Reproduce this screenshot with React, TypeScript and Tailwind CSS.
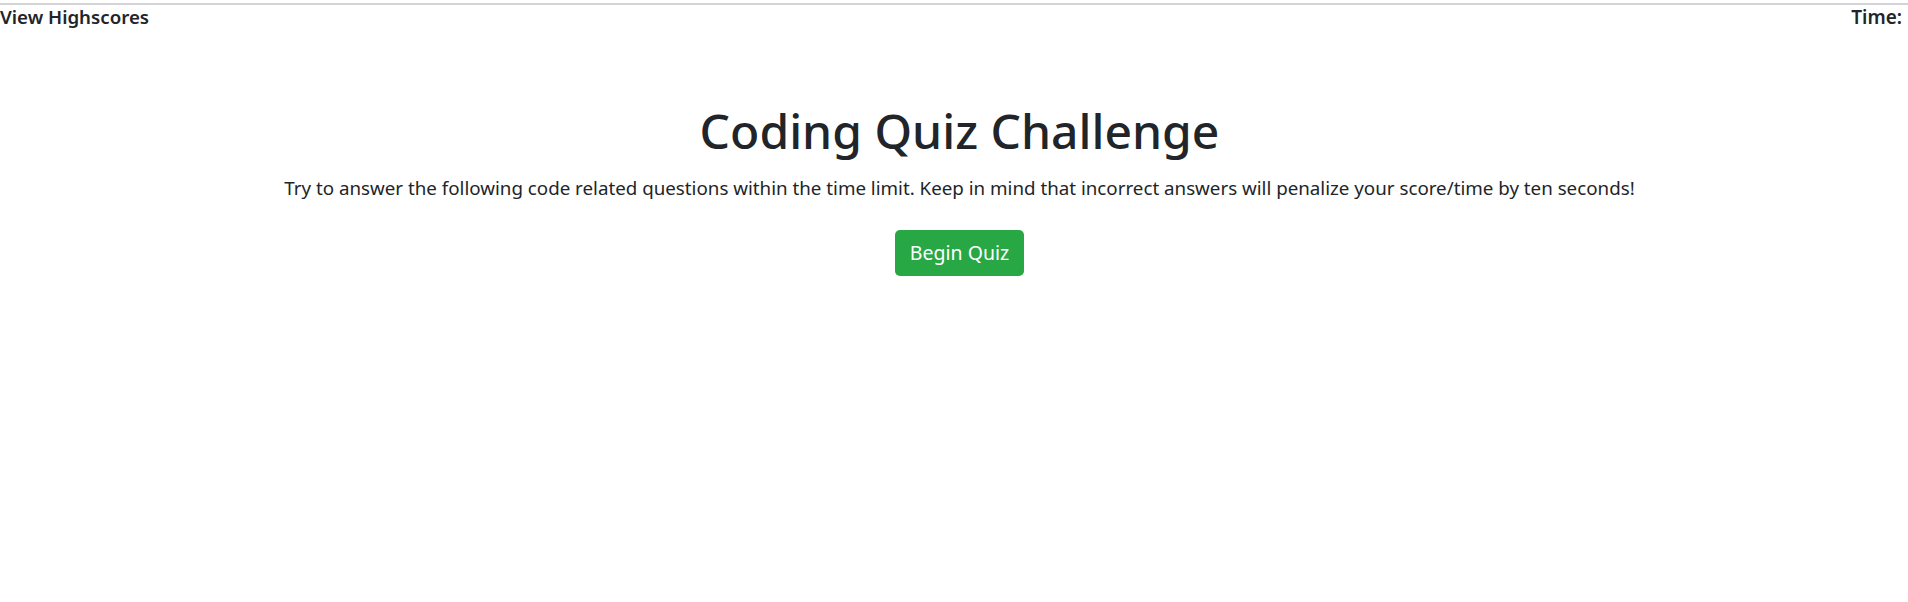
export default function App() {
  return (
    <div className="min-h-screen bg-white text-[#212529]" style={{ fontFamily: '"Noto Sans", "Open Sans", Arial, sans-serif' }}>
      <div className="pt-[3px]">
        <div className="border-t-2 border-[#d4d4d8] flex justify-between items-center pr-[6px]">
          <span className="font-semibold text-[18.7px] leading-[24px]">View Highscores</span>
          <span className="font-semibold text-[19px] leading-[24px]">Time:</span>
        </div>
      </div>
      <div className="flex flex-col items-center mt-[68px] pl-[11px]">
        <h1 className="text-[48px] leading-[67px] font-medium">Coding Quiz Challenge</h1>
        <p className="text-[18.75px] leading-[30px] mt-[9px]">
          Try to answer the following code related questions within the time limit. Keep in mind that incorrect answers will penalize your score/time by ten seconds!
        </p>
        <button className="mt-[27px] h-[46px] px-[15px] bg-[#28a745] text-white text-[19.5px] rounded-[5px]">Begin Quiz</button>
      </div>
    </div>
  );
}
